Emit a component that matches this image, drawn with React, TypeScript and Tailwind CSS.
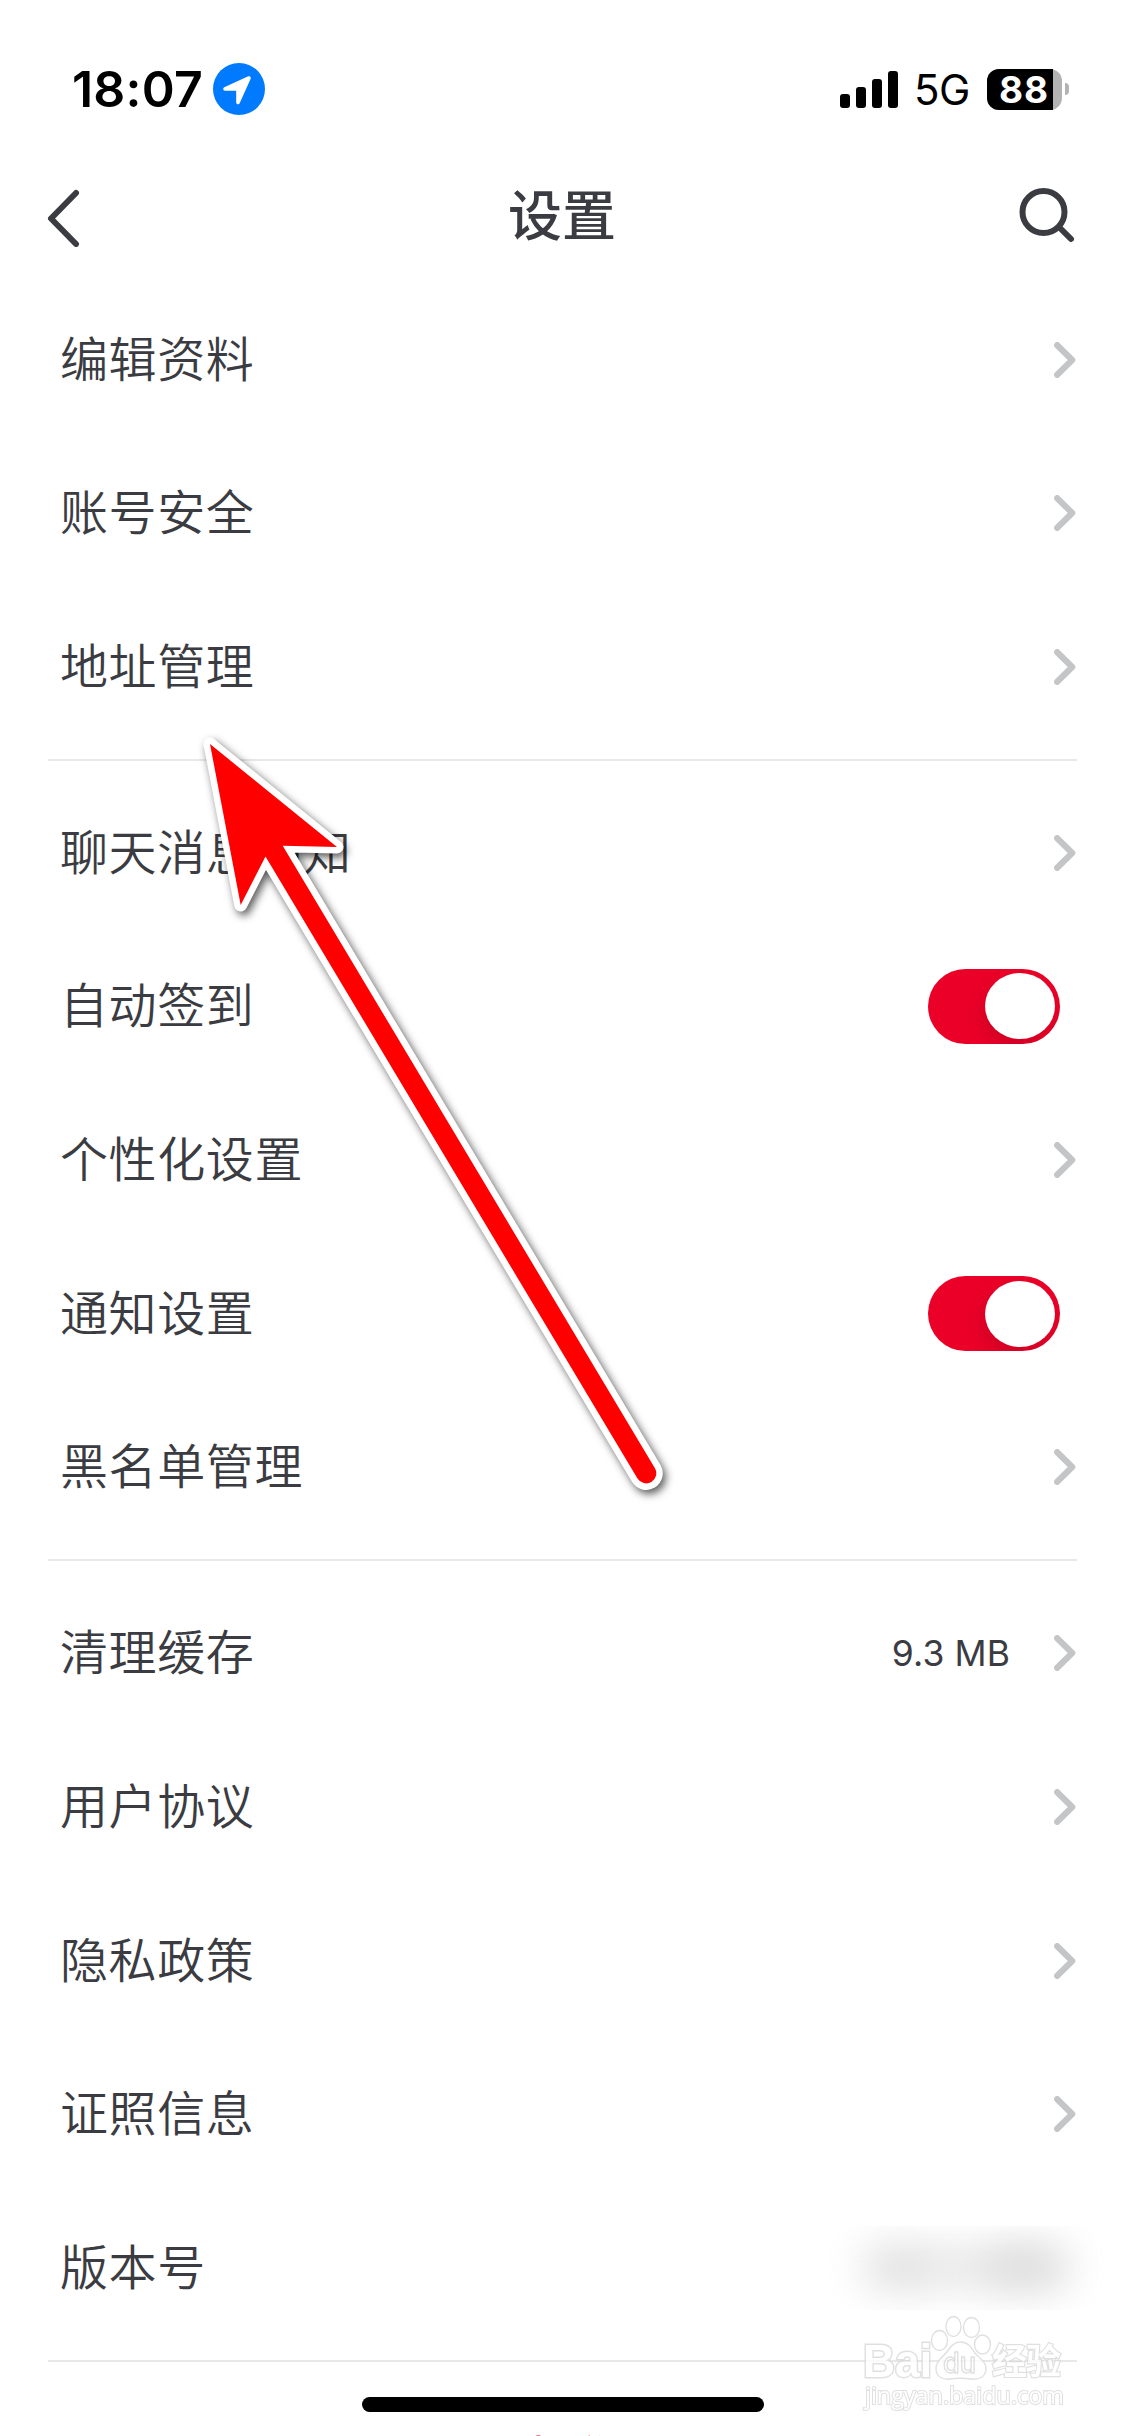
import type { ReactNode } from 'react'

type Item = {
  label: string
  value?: string
  kind?: 'link' | 'switch' | 'hidden'
}

const groups: Item[][] = [
  [{ label: '编辑资料' }, { label: '账号安全' }, { label: '地址管理' }],
  [
    { label: '聊天消息通知' },
    { label: '自动签到', kind: 'switch' },
    { label: '个性化设置' },
    { label: '通知设置', kind: 'switch' },
    { label: '黑名单管理' },
  ],
  [
    { label: '清理缓存', value: '9.3 MB' },
    { label: '用户协议' },
    { label: '隐私政策' },
    { label: '证照信息' },
    { label: '版本号', kind: 'hidden' },
  ],
]

function StatusBar() {
  return (
    <header className="flex h-[178px] shrink-0 items-start justify-between pt-[63px] pr-[56px] pl-[72px] text-black">
      <div className="flex h-[52px] items-center">
        <span className="w-[141px] text-[50px] leading-[52px] font-semibold tracking-[0.2px]">18:07</span>
        <svg className="h-[52px] w-[52px]" viewBox="0 0 52 52">
          <circle cx="26" cy="26" r="26" fill="#007aff" />
          <path
            d="M12 26L36 15L25 39.5V26Z"
            fill="#fff"
            stroke="#fff"
            strokeWidth="3.6"
            strokeLinejoin="round"
          />
        </svg>
      </div>
      <div className="flex h-[52px] items-center">
        <div className="mr-[16px] flex h-[37px] items-end gap-[6px]">
          <i className="h-[14px] w-[10px] rounded-[3px] bg-black" />
          <i className="h-[21px] w-[10px] rounded-[3px] bg-black" />
          <i className="h-[29px] w-[10px] rounded-[3px] bg-black" />
          <i className="h-[37px] w-[10px] rounded-[3px] bg-black" />
        </div>
        <span className="w-[73px] pt-[2px] text-[42px] leading-[52px] tracking-[-0.5px]">5G</span>
        <div className="flex h-[41px] w-[75px] rounded-[12px] bg-[#b3b3b3]">
          <span className="h-[41px] w-[66px] rounded-l-[12px] bg-black pl-[12px] text-[37px] leading-[41px] font-bold tracking-[1px] text-white">
            88
          </span>
        </div>
        <i className="ml-[3px] h-[12px] w-[4px] rounded-r-full bg-[#b3b3b3]" />
      </div>
    </header>
  )
}

function NavBar() {
  return (
    <nav className="flex h-[78px] shrink-0 items-center justify-between pr-[48px] pl-[45px]">
      <svg className="h-[60px] w-[60px]" viewBox="0 0 60 60" fill="none">
        <path d="M31 6L6 31.5L31 57" stroke="#3b3c42" strokeWidth="6" strokeLinecap="round" strokeLinejoin="round" />
      </svg>
      <h1 className="pl-[2px] text-[54px] leading-[78px] font-medium">设置</h1>
      <svg className="h-[60px] w-[60px]" viewBox="0 0 60 60" fill="none" stroke="#3b3c42" strokeWidth="6">
        <circle cx="26.5" cy="25" r="21" />
        <path d="M42 40L54 52" strokeLinecap="round" />
      </svg>
    </nav>
  )
}

function Chevron() {
  return (
    <svg className="h-[36px] w-[22px]" viewBox="0 0 22 36" fill="none">
      <path d="M3.2 3.2L18.2 18L3.2 32.8" stroke="#c4c5c7" strokeWidth="6.2" strokeLinecap="round" strokeLinejoin="round" />
    </svg>
  )
}

function Switch() {
  return (
    <div className="mr-[16px] flex h-[75px] w-[132px] items-center justify-end overflow-hidden rounded-[38px] bg-[#eb0028] pr-[5px]">
      <div className="h-[66px] w-[70px] rounded-[50%] bg-white shadow-[-2px_9px_20px_rgba(0,0,0,0.12)]" />
    </div>
  )
}

// The version number is smudged out
function HiddenValue() {
  return (
    <div className="relative -mr-[28px] h-[84px] w-[276px] overflow-hidden">
      <div className="absolute top-[22px] left-[34px] h-[38px] w-[208px] rounded-full bg-[#dcdcdc] opacity-70 blur-[20px]" />
      <div className="absolute top-[26px] left-[44px] h-[30px] w-[60px] rounded-full bg-[#d4d4d4] opacity-50 blur-[20px]" />
      <div className="absolute top-[22px] left-[155px] h-[38px] w-[80px] rounded-full bg-[#cecece] opacity-55 blur-[20px]" />
    </div>
  )
}

function Row({ item }: { item: Item }) {
  let right: ReactNode = <Chevron />
  if (item.kind === 'switch') right = <Switch />
  if (item.kind === 'hidden') right = <HiddenValue />

  return (
    <li className="flex h-[153.68px] items-center pr-[1px] pl-[12px]">
      <span className="flex-1 text-[48px] font-[350] tracking-[0.6px]">{item.label}</span>
      {item.value && <span className="mr-[44px] text-[35.5px] tracking-[0.1px]">{item.value}</span>}
      {right}
    </li>
  )
}

function Arrow() {
  return (
    <svg
      className="absolute top-[720px] left-[180px] h-[800px] w-[500px] drop-shadow-[3px_4px_4px_rgba(0,0,0,0.65)]"
      viewBox="180 720 500 800"
    >
      <path
        d="M210 744L337 847L282.7 845.7L654.8 1468A10 10 0 0 1 637.5 1478.5L265.5 856.5L240.7 905Z"
        fill="#f00"
        stroke="#fff"
        strokeWidth="13"
        strokeLinejoin="round"
        paintOrder="stroke"
      />
    </svg>
  )
}

function Watermark() {
  return (
    <svg
      className="absolute top-[2310px] left-[855px] h-[110px] w-[220px] opacity-80"
      viewBox="0 0 220 110"
      fill="#fff"
      stroke="#d9d9d9"
      strokeWidth="1.4"
    >
      <text
        x="8"
        y="67"
        fontSize="46"
        fontFamily="'Liberation Sans', sans-serif"
        fontWeight="700"
        strokeWidth="3"
        paintOrder="stroke"
        textLength="69"
        lengthAdjust="spacingAndGlyphs"
      >
        Bai
      </text>
      <ellipse cx="84.5" cy="30.5" rx="8" ry="10" />
      <ellipse cx="98.5" cy="16.5" rx="7.5" ry="10" />
      <ellipse cx="116.5" cy="17.5" rx="8" ry="10" />
      <ellipse cx="127.5" cy="34.5" rx="8" ry="9.5" />
      <path d="M105.5 32C98 32 95 38 91 43C86 48 80 53 81 60C82 67 88 70 95 69C102 68 109 68 116 69C124 70 130 67 131 60C132 52 124 48 120 43C116 37 113 32 105.5 32Z" />
      <text x="88" y="63" fontSize="28" fontFamily="Inter, sans-serif" fontWeight="500" textLength="33" lengthAdjust="spacingAndGlyphs">
        du
      </text>
      <text
        x="137"
        y="64"
        fontSize="35"
        fontFamily="'Noto Sans CJK SC', sans-serif"
        fontWeight="700"
        strokeWidth="2.4"
        paintOrder="stroke"
        textLength="69"
      >
        经验
      </text>
      <text
        x="10"
        y="94"
        fontSize="23"
        fontFamily="'Open Sans', sans-serif"
        strokeWidth="2"
        paintOrder="stroke"
        textLength="199"
        lengthAdjust="spacingAndGlyphs"
      >
        jingyan.baidu.com
      </text>
    </svg>
  )
}

export default function App() {
  return (
    <div className="relative flex h-[2436px] w-[1125px] flex-col overflow-hidden bg-white font-[Inter,'Noto_Sans_CJK_SC',sans-serif] text-[#3b3c42]">
      <StatusBar />
      <NavBar />
      <main className="shrink-0 px-[48px] pt-[11.96px]">
        {groups.map((items, i) => (
          <ul key={i} className="border-b-2 border-[#e8e8e8] py-[15px]">
            {items.map((item) => (
              <Row key={item.label} item={item} />
            ))}
          </ul>
        ))}
      </main>
      {/* starts just below the fold, only the stroke tops peek in */}
      <button className="mt-[62px] h-[70px] shrink-0 text-[48px] leading-[70px] text-[#eb0028]">退出登录</button>

      <Arrow />
      <Watermark />
      <div className="absolute top-[2397px] left-[362px] h-[15px] w-[402px] rounded-full bg-black" />
    </div>
  )
}
